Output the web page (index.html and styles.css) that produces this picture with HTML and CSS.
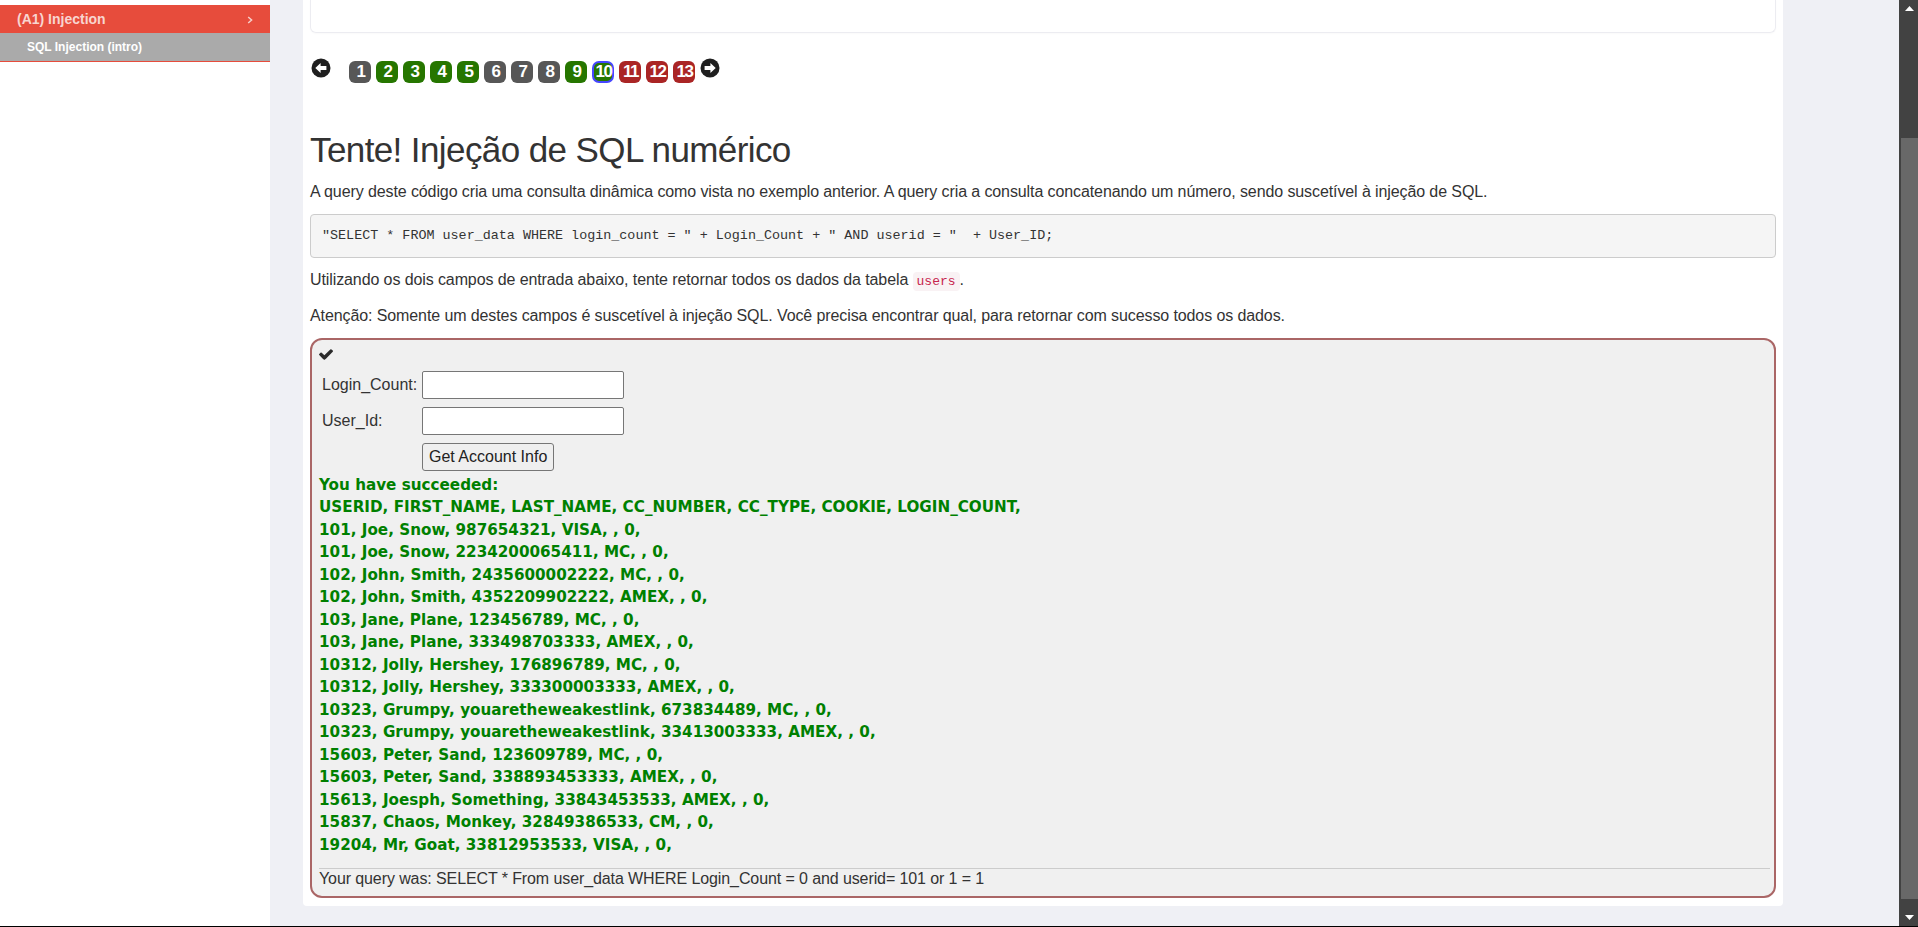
FILE: index.html
```html
<!DOCTYPE html>
<html lang="pt">
<head>
<meta charset="utf-8">
<title>WebGoat - SQL Injection (intro)</title>
<link rel="stylesheet" href="styles.css">
</head>
<body>
<div class="app">
  <aside class="sidebar">
    <div class="menu-cat">
      <span>(A1) Injection</span>
      <svg class="chev" width="6" height="8" viewBox="0 0 6 8"><polyline points="1.2,1 4.6,4 1.2,7" fill="none" stroke="#f6cfca" stroke-width="1.5"/></svg>
    </div>
    <div class="menu-item">SQL Injection (intro)</div>
  </aside>

  <main class="main">
    <div class="panel">
      <div class="top-card"></div>

      <nav class="pager">
        <svg class="nav-arrow prev" width="20" height="20" viewBox="0 0 20 20"><circle cx="10" cy="10" r="9.5" fill="#1f1f1f"/><path d="M4.3 10 L9.6 4.9 L9.6 7.9 L15.4 7.9 L15.4 12.1 L9.6 12.1 L9.6 15.1 Z" fill="#fff"/></svg>
        <span class="pg gray">1</span>
        <span class="pg green">2</span>
        <span class="pg green">3</span>
        <span class="pg green">4</span>
        <span class="pg green">5</span>
        <span class="pg gray">6</span>
        <span class="pg gray">7</span>
        <span class="pg gray">8</span>
        <span class="pg green">9</span>
        <span class="pg green current">10</span>
        <span class="pg red">11</span>
        <span class="pg red">12</span>
        <span class="pg red">13</span>
        <svg class="nav-arrow next" width="20" height="20" viewBox="0 0 20 20"><circle cx="10" cy="10" r="9.5" fill="#1f1f1f"/><path d="M15.7 10 L10.4 4.9 L10.4 7.9 L4.6 7.9 L4.6 12.1 L10.4 12.1 L10.4 15.1 Z" fill="#fff"/></svg>
      </nav>

      <h1 class="title">Tente! Injeção de SQL numérico</h1>
      <p class="text">A query deste código cria uma consulta dinâmica como vista no exemplo anterior. A query cria a consulta concatenando um número, sendo suscetível à injeção de SQL.</p>
      <pre class="code">"SELECT * FROM user_data WHERE login_count = " + Login_Count + " AND userid = "  + User_ID;</pre>
      <p class="text">Utilizando os dois campos de entrada abaixo, tente retornar todos os dados da tabela <code class="inline-code">users</code>.</p>
      <p class="text">Atenção: Somente um destes campos é suscetível à injeção SQL. Você precisa encontrar qual, para retornar com sucesso todos os dados.</p>

      <div class="attack-box">
        <div class="check-row">
          <svg class="check" width="14" height="11" viewBox="121 334 1550 1188"><path d="M1671 566q0 40-28 68l-724 724-136 136q-28 28-68 28t-68-28l-136-136-362-362q-28-28-28-68t28-68l136-136q28-28 68-28t68 28l294 295 656-657q28-28 68-28t68 28l136 136q28 28 28 68z" fill="#2b2b2b"/></svg>
        </div>
        <form class="attack-form">
          <label class="lbl" for="login">Login_Count:</label>
          <input class="field" id="login" type="text">
          <label class="lbl" for="uid">User_Id:</label>
          <input class="field" id="uid" type="text">
          <button class="btn" type="button">Get Account Info</button>
        </form>
        <div class="result">
          <div>You have succeeded:</div>
          <div>USERID, FIRST_NAME, LAST_NAME, CC_NUMBER, CC_TYPE, COOKIE, LOGIN_COUNT,</div>
          <div>101, Joe, Snow, 987654321, VISA, , 0,</div>
          <div>101, Joe, Snow, 2234200065411, MC, , 0,</div>
          <div>102, John, Smith, 2435600002222, MC, , 0,</div>
          <div>102, John, Smith, 4352209902222, AMEX, , 0,</div>
          <div>103, Jane, Plane, 123456789, MC, , 0,</div>
          <div>103, Jane, Plane, 333498703333, AMEX, , 0,</div>
          <div>10312, Jolly, Hershey, 176896789, MC, , 0,</div>
          <div>10312, Jolly, Hershey, 333300003333, AMEX, , 0,</div>
          <div>10323, Grumpy, youaretheweakestlink, 673834489, MC, , 0,</div>
          <div>10323, Grumpy, youaretheweakestlink, 33413003333, AMEX, , 0,</div>
          <div>15603, Peter, Sand, 123609789, MC, , 0,</div>
          <div>15603, Peter, Sand, 338893453333, AMEX, , 0,</div>
          <div>15613, Joesph, Something, 33843453533, AMEX, , 0,</div>
          <div>15837, Chaos, Monkey, 32849386533, CM, , 0,</div>
          <div>19204, Mr, Goat, 33812953533, VISA, , 0,</div>
        </div>
        <hr class="sep">
        <div class="query">Your query was: SELECT * From user_data WHERE Login_Count = 0 and userid= 101 or 1 = 1</div>
      </div>
    </div>
  </main>

  <div class="scrollbar">
    <div class="sb-btn"><svg width="9" height="5" viewBox="0 0 9 5"><polygon points="0,5 4.5,0 9,5" fill="#fff"/></svg></div>
    <div class="sb-track"><div class="sb-thumb"></div></div>
    <div class="sb-btn"><svg width="9" height="5" viewBox="0 0 9 5"><polygon points="0,0 9,0 4.5,5" fill="#fff"/></svg></div>
  </div>
</div>
</body>
</html>
```

FILE: styles.css
```css
html, body {
  margin: 0;
  padding: 0;
  overflow: hidden;
}

body {
  font-family: "Liberation Sans", Arial, sans-serif;
  color: #333;
  background: #fff;
}

.app {
  display: flex;
  height: 926px;
  border-bottom: 1px solid #000;
}

/* Sidebar */
.sidebar {
  width: 270px;
  flex: none;
  background: #fff;
  padding-top: 5px;
}

.menu-cat {
  height: 28px;
  background: #e74c3c;
  display: flex;
  align-items: center;
  justify-content: space-between;
  padding: 0 17px 0 17px;
  color: #f8d5d0;
  font-weight: bold;
  font-size: 14px;
  line-height: 28px;
}

.menu-cat .chev {
  display: block;
  margin-top: 1px;
}

.menu-item {
  height: 28px;
  background: #aaaaaa;
  color: #fff;
  font-weight: bold;
  font-size: 12px;
  line-height: 28px;
  padding-left: 27px;
  border-bottom: 1px solid #e74c3c;
}

/* Main */
.main {
  flex: 1;
  background: #eff0f5;
  padding-left: 33px;
  overflow: hidden;
}

.panel {
  width: 1480px;
  box-sizing: border-box;
  background: #fff;
  padding: 0 7px 8px 7px;
  border-radius: 0 0 4px 4px;
}

.top-card {
  height: 32px;
  border: 1px solid #ececf1;
  border-top: none;
  border-radius: 0 0 6px 6px;
  box-shadow: 0 1px 2px rgba(0, 0, 0, 0.025);
  margin-bottom: 25px;
}

.pager {
  display: flex;
  align-items: flex-start;
  gap: 5px;
  height: 25px;
  margin-left: 1px;
}

.nav-arrow {
  display: block;
  flex: none;
}

.nav-arrow.prev {
  margin-right: 13px;
}

.pg {
  width: 22px;
  height: 22px;
  margin-top: 3px;
  box-sizing: border-box;
  border-radius: 6px;
  color: #fff;
  font-weight: bold;
  font-size: 17px;
  line-height: 22px;
  text-align: center;
  letter-spacing: -1.5px;
  text-indent: 1px;
}

.pg.gray { background: #575757; }
.pg.green { background: #267600; }
.pg.red { background: #aa2525; }
.pg.current {
  border: 2px solid #4646ff;
  line-height: 18px;
  border-radius: 7px;
}

.title {
  font-size: 35px;
  letter-spacing: -0.6px;
  font-weight: normal;
  line-height: 39.6px;
  margin: 47px 0 10px 0;
  color: #333;
}

.text {
  font-size: 16px;
  letter-spacing: -0.1px;
  line-height: 24px;
  margin: 0 0 10px 0;
}

.code {
  margin: 0 0 10px 0;
  padding: 12px 11px;
  background: #f5f5f5;
  border: 1px solid #cccccc;
  border-radius: 4px;
  font-family: "Liberation Mono", "DejaVu Sans Mono", monospace;
  font-size: 13.4px;
  line-height: 18px;
  color: #333;
  white-space: pre;
}

.inline-code {
  font-family: "Liberation Mono", "DejaVu Sans Mono", monospace;
  font-size: 13px;
  letter-spacing: 0;
  color: #c7254e;
  background: #f9f2f4;
  padding: 2px 4px;
  border-radius: 4px;
}

/* Attack box */
.attack-box {
  margin-top: 2px;
  border: 2px solid #aa6666;
  border-radius: 12px;
  background: #f0f0f0;
  padding: 8px 4px 7px 7px;
}

.check-row {
  height: 22px;
}

.check {
  display: block;
  margin-top: 1px;
}

.attack-form {
  display: grid;
  grid-template-columns: 103px 202px;
  row-gap: 8px;
  margin: 0;
}

.lbl {
  font-size: 16px;
  line-height: 24px;
  padding-left: 3px;
  align-self: center;
  color: #333;
}

.field {
  height: 28px;
  box-sizing: border-box;
  border: 1px solid #767676;
  border-radius: 2px;
  background: #fff;
  margin: 0;
  padding: 1px 4px;
  font-size: 16px;
}

.btn {
  grid-column: 2;
  justify-self: start;
  height: 28px;
  box-sizing: border-box;
  padding: 0 6px;
  margin: 0;
  border: 1px solid #767676;
  border-radius: 3px;
  background: #efefef;
  font-family: "Liberation Sans", Arial, sans-serif;
  font-size: 16px;
  color: #222;
}

.result {
  margin-top: 3px;
  color: #008000;
  font-family: "DejaVu Sans", Verdana, sans-serif;
  font-weight: bold;
  font-size: 15.2px;
  line-height: 22.5px;
  white-space: nowrap;
}

.sep {
  margin: 12px 0 0 0;
  border: 0;
  border-top: 1px solid #cccccc;
  height: 0;
}

.query {
  font-size: 16px;
  letter-spacing: -0.1px;
  line-height: 20px;
  color: #333;
}

/* Scrollbar */
.scrollbar {
  width: 19px;
  flex: none;
  background: #424242;
  display: flex;
  flex-direction: column;
}

.sb-btn {
  height: 17px;
  display: flex;
  align-items: center;
  justify-content: center;
  padding-left: 2px;
}

.sb-track {
  flex: 1;
  padding: 121px 0 10px 2px;
  display: flex;
}

.sb-thumb {
  flex: 1;
  background: #686868;
}
```
